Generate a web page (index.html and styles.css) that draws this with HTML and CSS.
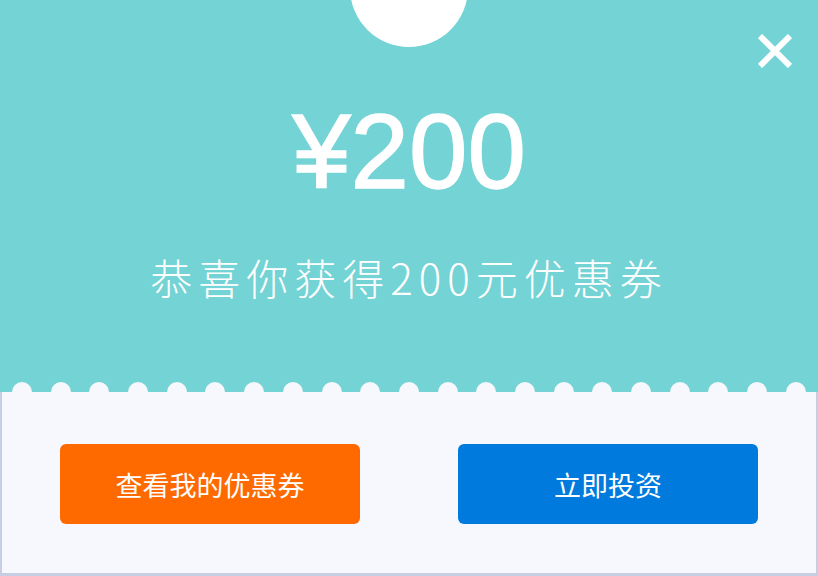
FILE: index.html
```html
<!DOCTYPE html>
<html lang="zh-CN">
<head>
    <meta charset="UTF-8">
    <meta name="viewport" content="width=device-width, initial-scale=1.0">
    <title>优惠券</title>
    <link rel="stylesheet" href="styles.css">
</head>
<body>
    <div class="coupon">
        <div class="coupon-top">
            <div class="notch"></div>
            <button class="close" type="button" aria-label="关闭">
                <svg width="34" height="34" viewBox="0 0 34 34">
                    <path d="M2 2 L32 32 M32 2 L2 32" stroke="#fff" stroke-width="6" fill="none"/>
                </svg>
            </button>
            <div class="amount">¥200</div>
            <div class="subtitle">恭喜你获得200元优惠券</div>
        </div>
        <div class="coupon-bottom">
            <div class="scallops">
                <span></span><span></span><span></span><span></span><span></span><span></span><span></span>
                <span></span><span></span><span></span><span></span><span></span><span></span><span></span>
                <span></span><span></span><span></span><span></span><span></span><span></span><span></span>
            </div>
            <div class="actions">
                <a class="btn btn-orange" href="#">查看我的优惠券</a>
                <a class="btn btn-blue" href="#">立即投资</a>
            </div>
        </div>
    </div>
</body>
</html>
```

FILE: styles.css
```css
body {
    margin: 0;
    background: #ffffff;
    font-family: "Noto Sans CJK SC", "Noto Sans", sans-serif;
}
.coupon {
    width: 818px;
    height: 576px;
    display: flex;
    flex-direction: column;
}
.coupon-top {
    position: relative;
    height: 392px;
    background-color: #74d3d5;
    color: #ffffff;
    text-align: center;
    overflow: hidden;
}
.notch {
    position: absolute;
    left: 350px;
    top: -71px;
    width: 118px;
    height: 118px;
    border-radius: 50%;
    background: #ffffff;
}
.close {
    position: absolute;
    top: 34px;
    right: 26px;
    width: 34px;
    height: 34px;
    padding: 0;
    border: none;
    background: none;
    cursor: pointer;
}
.close svg {
    display: block;
}
.amount {
    padding-top: 99px;
    font-family: "Liberation Sans", Arial, sans-serif;
    font-size: 105px;
    line-height: 1;
    -webkit-text-stroke: 1.5px #ffffff;
}
.subtitle {
    margin-top: 52px;
    font-size: 42px;
    font-weight: 300;
    line-height: 1;
    letter-spacing: 6px;
}
.coupon-bottom {
    position: relative;
    flex: 1;
    background-color: #f7f8fd;
    border: 2px solid #c7cde2;
    border-top: none;
    border-bottom-width: 3px;
}
.scallops {
    position: absolute;
    top: -10px;
    left: 10px;
    right: 10px;
    display: flex;
    justify-content: space-between;
}
.scallops span {
    width: 20px;
    height: 20px;
    border-radius: 50%;
    background-color: #f7f8fd;
}
.actions {
    display: flex;
    justify-content: center;
    gap: 98px;
    padding-top: 52px;
}
.btn {
    width: 300px;
    height: 80px;
    border-radius: 6px;
    display: flex;
    align-items: center;
    justify-content: center;
    color: #ffffff;
    font-size: 27px;
    text-decoration: none;
}
.btn-orange {
    background-color: #ff6a00;
}
.btn-blue {
    background-color: #007bdd;
}
```
